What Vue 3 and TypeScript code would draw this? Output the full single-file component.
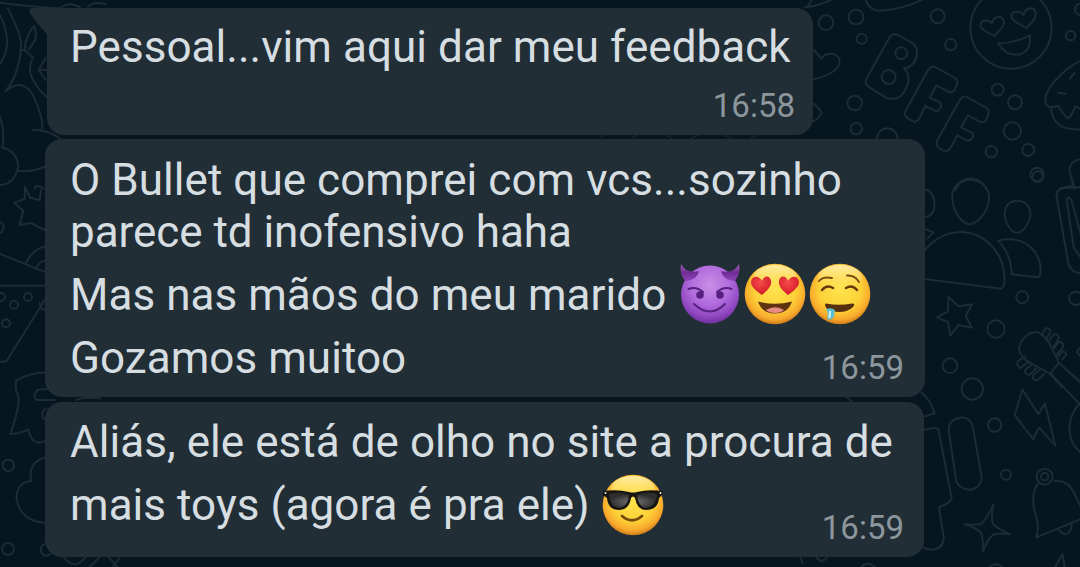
<script setup lang="ts">
type Emoji = 'devil' | 'love' | 'drool' | 'cool'
interface Line { text: string; size: string; emojis?: Emoji[] }
interface Message { id: string; time: string; lines: Line[] }

const messages: Message[] = [
  { id: 'first', time: '16:58', lines: [{ text: 'Pessoal...vim aqui dar meu feedback', size: 'normal' }] },
  {
    id: 'second',
    time: '16:59',
    lines: [
      { text: 'O Bullet que comprei com vcs...sozinho', size: 'normal' },
      { text: 'parece td inofensivo haha', size: 'tight' },
      { text: 'Mas nas mãos do meu marido', size: 'spaced', emojis: ['devil', 'love', 'drool'] },
      { text: 'Gozamos muitoo', size: 'spaced' },
    ],
  },
  {
    id: 'third',
    time: '16:59',
    lines: [
      { text: 'Aliás, ele está de olho no site a procura de', size: 'normal' },
      { text: 'mais toys (agora é pra ele)', size: 'spaced', emojis: ['cool'] },
    ],
  },
]
</script>

<template>
  <main class="screen">
    <svg class="wallpaper" viewBox="0 0 1080 567" aria-hidden="true">
      <defs>
        <radialGradient id="yellow" cx=".5" cy=".42" r=".58">
          <stop offset="0" stop-color="#ffe34e" /><stop offset=".6" stop-color="#fdd138" />
          <stop offset=".86" stop-color="#f8a92c" /><stop offset="1" stop-color="#cf7a1b" />
        </radialGradient>
        <linearGradient id="shine" x2="0" y2="1">
          <stop offset="0" stop-color="#fff3bd" stop-opacity=".85" /><stop offset="1" stop-color="#ffe45c" stop-opacity="0" />
        </linearGradient>
        <radialGradient id="purple" cx=".5" cy=".34" r=".68">
          <stop offset="0" stop-color="#c98fe6" /><stop offset=".5" stop-color="#b06bdc" /><stop offset=".8" stop-color="#9147c0" /><stop offset="1" stop-color="#692d98" />
        </radialGradient>
        <linearGradient id="horn" x2="0" y2="1"><stop offset="0" stop-color="#a568bf" /><stop offset=".5" stop-color="#702b94" /><stop offset="1" stop-color="#8f45b8" /></linearGradient>
        <radialGradient id="red" cx=".45" cy=".35" r=".7"><stop offset="0" stop-color="#f54b49" /><stop offset="1" stop-color="#cf1626" /></radialGradient>
        <radialGradient id="lens" cx=".5" cy=".6" r=".5"><stop offset="0" stop-color="#777" /><stop offset="1" stop-color="#2d2d2d" /></radialGradient>
      </defs>
      <!-- top right: smiley, balloon letters, cupcake -->
      <g transform="translate(800 0) scale(.33333)">
        <circle cx="78" cy="68" r="22" /><circle cx="168" cy="51" r="22" /><circle cx="185" cy="116" r="15" />
        <circle cx="413" cy="49" r="21" /><circle cx="452" cy="134" r="17" /><circle cx="164" cy="309" r="22" />
        <circle cx="169" cy="386" r="17" /><circle cx="593" cy="269" r="18" /><circle cx="645" cy="307" r="21" />
        <circle cx="637" cy="393" r="26" /><circle cx="574" cy="455" r="17" /><circle cx="685" cy="450" r="18" />
        <circle cx="711" cy="523" r="20" /><circle cx="812" cy="107" r="14" /><circle cx="262" cy="416" r="31" />
        <circle cx="842" cy="28" r="17" />
        <path d="M195 -5Q204 29 237 32Q306 30 375 -5M15 22Q65 17 100 -5M22 22L38 -5" />
        <circle cx="633" cy="84" r="122" />
        <path d="M583 108C560 96 536 84 542 71C548 56 568 61 576 69C581 47 607 45 612 63C615 80 594 96 583 108ZM680 84C657 72 630 60 635 44C641 30 663 35 671 45C674 22 702 18 707 38C710 57 691 72 680 84Z" />
        <path d="M594 130Q645 130 689 106Q695 148 665 161Q620 173 594 130Z" />
        <path d="M42 150L64 176C74 159 106 153 118 177C125 202 91 228 40 238M42 311Q56 322 65 338Q55 358 38 365" />
        <path d="M271 108Q280 99 294 105L335 128Q352 139 351 160C350 181 337 202 312 205C328 222 331 243 316 269C302 298 282 302 257 292L209 263Q192 251 200 235Z" />
        <circle cx="304" cy="160" r="18" /><circle cx="266" cy="231" r="21" />
        <path d="M316 333L384 210Q395 195 408 202L465 234Q475 242 471 252L463 271Q455 282 441 273L409 256L389 293L418 306Q428 314 419 327Q411 337 402 331L376 318L359 353Q348 372 334 361Q307 350 316 333Z" />
        <path d="M412 421L479 301Q490 284 503 292L560 324Q569 333 565 344L558 361Q549 371 537 364L504 346L483 382L514 397Q524 404 516 415Q508 425 497 420L472 406L453 442Q443 457 428 451Q403 438 412 421Z" />
        <path d="M845 180C791 207 730 267 736 309Q746 326 760 320L775 318Q784 333 797 350Q807 363 820 333L826 318L845 330M754 322C754 372 789 391 845 388M775 278L798 281M809 236L823 219" />
        <path d="M845 477Q806 482 809 515L819 557L780 565M467 570Q481 535 514 535Q547 540 561 570" />
      </g>
      <!-- middle right: people, star, brush -->
      <g transform="translate(800 180) scale(.33333)">
        <path d="M510 -1C551 -1 575 34 565 70C556 105 530 133 506 133C478 126 459 88 457 56C454 23 477 0 510 -1ZM651 62C684 62 698 91 688 119Q672 160 648 158C628 154 612 118 614 96C617 74 632 63 651 62Z" />
        <path d="M350 242C390 180 437 154 489 156C552 160 600 211 610 265C615 300 617 321 602 326L350 294M594 182C637 171 676 180 705 216C722 239 725 273 719 289Q713 292 704 291L635 283Q634 223 594 182Z" />
        <path d="M376 28C401 34 405 66 403 84Q399 106 378 111M376 147L400 157L382 176" />
        <path d="M445 351L476 379L516 373L497 407L515 443L476 435L451 466L444 426L410 412L444 394Z" />
        <circle cx="667" cy="352" r="18" /><circle cx="588" cy="447" r="26" /><circle cx="450" cy="557" r="22" />
        <circle cx="827" cy="355" r="20" /><circle cx="713" cy="-10" r="16" />
        <path d="M845 22L799 23Q765 27 770 51L805 250Q815 280 842 279M845 237L821 202L800 59Q804 48 814 59L845 173M814 -10L824 28" />
        <path d="M711 456C682 456 661 480 657 507Q661 529 680 543L750 582L777 548L749 491Q728 461 711 456ZM777 548L840 607M750 582L785 620" />
        <path d="M725 465L737 445Q752 444 751 456L739 478M745 485L762 463Q779 461 775 477L760 501M762 505L777 485Q793 487 788 503L771 523M775 530L787 514Q801 516 797 527L787 538M677 530L656 541Q645 556 662 564L687 544M696 553L676 569Q672 584 689 584L711 563M719 570L699 586Q697 602 712 601L733 581M838 504L831 516L842 530" />
      </g>
      <!-- bottom right: crayon, bolt, bell, sparkle -->
      <g transform="translate(800 370) scale(.33333)">
        <circle cx="517" cy="57" r="32" /><circle cx="584" cy="165" r="20" /><circle cx="618" cy="314" r="15" />
        <path d="M667 59L715 132L735 101L766 227L717 173L699 207L644 135ZM365 68Q392 90 404 130L374 139" />
        <path d="M446 180Q444 150 480 143Q509 141 518 168L545 323Q544 352 512 359Q481 359 469 335Z" />
        <path d="M374 179Q405 170 415 177L455 385Q450 400 417 411L431 501Q432 533 399 539Q370 539 366 527" />
        <path d="M580 403Q572 445 579 462Q598 480 631 493Q600 488 579 494Q560 510 549 545Q550 500 542 487Q525 472 495 463Q530 467 544 461Q560 448 580 403Z" />
        <circle cx="734" cy="320" r="24" /><circle cx="734" cy="320" r="11" />
        <path d="M713 341C694 370 697 405 709 441Q718 469 709 502L845 446M764 332C808 330 818 356 845 417M776 476Q786 497 804 490Q819 476 814 459M845 95C802 133 791 209 845 250M760 600L788 552L795 600" />
        <path d="M140 80Q146 88 158 96M565 595Q587 570 610 595M180 595Q202 568 228 595M50 563Q65 583 80 563M0 560L8 580" />
        <path d="M799 0L845 37M752 10L843 107" />
      </g>
      <!-- left edge: mascot, party hat, cloud -->
      <g transform="scale(.33333)">
        <path d="M0 8Q100 21 175 25M0 45Q42 130 0 192M24 25C48 79 74 114 59 175Q47 239 17 273M60 150L75 151C72 124 88 92 103 79Q111 98 105 121L87 148M75 151L99 173Q80 210 99 239Q113 268 140 291M137 173L116 210L137 240M116 210L140 210" />
        <path d="M18 273C60 236 94 262 107 305Q128 351 127 385M100 390Q145 389 180 416M0 350Q16 397 7 443Q51 452 55 500Q44 552 0 556M55 512Q96 518 140 498M105 566Q105 551 130 565M180 25Q205 3 240 21M265 20Q280 3 317 12" />
      </g>
      <g transform="translate(0 190) scale(.33333)">
        <path d="M123 0L119 30L91 23L75 -9L74 27L43 38L70 62L59 105L92 99L140 123M0 95Q18 103 6 126L-3 130M0 192L140 248M77 222Q96 176 140 168M107 237Q115 215 140 210M0 287H140M140 320L24 506Q20 518 0 515M51 570Q86 550 140 547M119 340Q120 359 140 361" />
        <circle cx="3" cy="321" r="12" /><circle cx="42" cy="344" r="12" /><circle cx="84" cy="321" r="12" /><circle cx="18" cy="400" r="12" />
      </g>
      <g transform="translate(0 380) scale(.33333)">
        <path d="M49 0Q43 30 55 49Q61 76 31 162Q51 163 85 149Q92 185 115 188Q127 188 140 181M140 27L114 29Q96 44 109 60L165 60M140 85Q122 91 128 114L140 119M140 231C104 240 83 265 95 303C60 303 42 337 53 370Q69 425 140 429" />
        <circle cx="25" cy="256" r="17" /><circle cx="24" cy="507" r="18" /><circle cx="140" cy="509" r="18" />
        <path d="M190 530Q225 575 258 530M270 560L300 530M327 532L352 560M340 558L358 535M230 60Q250 50 300 55" />
      </g>
      <path d="M600 138L605 134M632 138L638 134M664 134L673 139M690 139L700 134M723 134L732 139M750 139L760 134" />
    </svg>

    <article v-for="message in messages" :key="message.id" class="bubble" :class="message.id">
      <svg v-if="message.id === 'first'" class="tail" viewBox="0 0 24 30" aria-hidden="true">
        <path d="M24 0H3Q-1 1 1 5Q8 16 19 27H24Z" fill="#222e35" />
      </svg>
      <div v-for="line in message.lines" :key="line.text" class="line" :class="line.size">
        <span class="words">{{ line.text }}</span>
        <svg v-for="emoji in line.emojis" :key="emoji" class="emoji" :class="emoji" viewBox="0 0 62 62" aria-hidden="true">
          <template v-if="emoji === 'devil'">
            <circle cx="31" cy="31.5" r="29" fill="url(#purple)" />
            <path d="M2 1Q7 11 20 8Q18 17 7 18Q0 13 2 1ZM60 1Q55 11 42 8Q44 17 55 18Q62 13 60 1Z" fill="url(#horn)" />
            <g fill="none" stroke="#572080" stroke-linecap="round" stroke-width="2"><path d="M9.500 26Q17 23 24 29M52.500 26Q45 23 38 29M15 41Q31 56 46 41" /></g>
            <circle cx="21" cy="32" r="3.800" fill="#572080" /><circle cx="41" cy="32" r="3.800" fill="#572080" />
          </template>
          <template v-else>
            <circle cx="31" cy="31" r="30.3" fill="url(#yellow)" /><ellipse cx="31" cy="15" rx="22" ry="13" fill="url(#shine)" />
          </template>
          <template v-if="emoji === 'love'">
            <path d="M18 32C9 26 5 21 8 16C11 12 16 14 18 18C20 12 26 12 27 18C28 23 23 28 18 32Z" fill="url(#red)" />
            <path d="M44 32C39 28 34 23 35 18C36 12 42 12 44 18C46 14 51 12 54 16C57 21 53 26 44 32Z" fill="url(#red)" />
            <path d="M14 38.500Q31 43 48 38.500Q44 50.500 31 50.500Q18 50.500 14 38.500Z" fill="#5f3210" />
            <path d="M22 47Q31 41.500 40 47Q37 50 31 50Q25 50 22 47Z" fill="#e58c84" />
          </template>
          <template v-if="emoji === 'drool'">
            <path d="M10 18Q14 13 23 15M38 12.500Q46 12 50 19" fill="none" stroke="#7d4c10" stroke-width="1.9" stroke-linecap="round" />
            <path d="M13 27Q18 21 24 25M37 25Q43 21 48 27" fill="none" stroke="#66370a" stroke-width="2.4" stroke-linecap="round" />
            <path d="M17 40.500Q30 43 43 40.500Q47 40.500 44 44Q39 49 30 49Q17 49 16 42Q16 40 17 40.500Z" fill="#56300c" />
            <path d="M17 46Q22 44 26 47Q25 51 25 54Q20 59 18 55Q20 50 17 46Z" fill="#57bfd0" /><path d="M21 48L20.500 55" stroke="#d7f6ef" stroke-width="2" />
          </template>
          <template v-if="emoji === 'cool'">
            <path d="M1 17Q16 15 27 18Q31 19 35 18Q46 15 61 17L60 21L57 24Q56 36 44 36Q35 36 33 24Q31 21 29 24Q27 36 17 36Q6 36 5 24L1 21Z" fill="#171512" />
            <path d="M7 20Q17 17 27 21Q26 33 17 34Q8 33 7 20ZM35 21Q45 17 55 20Q54 33 44 34Q36 33 35 21Z" fill="url(#lens)" />
            <circle cx="3.5" cy="19" r="1" fill="#eee" /><circle cx="58.5" cy="19" r="1" fill="#eee" />
            <path d="M20 42Q30 50.500 40 42" fill="none" stroke="#73480c" stroke-width="2.800" stroke-linecap="round" />
          </template>
        </svg>
      </div>
      <time class="time">{{ message.time }}</time>
    </article>
  </main>
</template>

<style>
body { margin: 0; background: #06161e; }
</style>

<style scoped>
.screen {
  position: relative;
  box-sizing: border-box;
  width: 1080px;
  height: 567px;
  padding: 8px 0 0 45px;
  overflow: hidden;
  background: #06161e;
  font-family: Roboto, sans-serif;
}
.wallpaper {
  position: absolute;
  inset: 0;
  width: 1080px;
  height: 567px;
  fill: none;
  stroke: #1d2c34;
}
.wallpaper g { stroke-width: 6px; stroke-linejoin: round; stroke-linecap: round; }
.bubble {
  position: relative;
  box-sizing: border-box;
  width: 880px;
  margin-bottom: 4px;
  padding: 15px 0 0 25px;
  border-radius: 17px;
  background: #222e35;
}
.first { width: 766px; height: 127px; margin-left: 2px; padding: 13px 0 0 23px; border-top-left-radius: 4px; }
.second { height: 258px; }
.third { height: 155px; width: 879px; margin-top: 5px; }
.third { padding-top: 14px; }
.tail { position: absolute; left: -18px; top: 0; width: 24px; height: 30px; }
.line {
  display: flex;
  align-items: center;
  height: 52px;
  color: #d6dee2;
  font-size: 44px;
  line-height: 52px;
  letter-spacing: .05px;
  white-space: nowrap;
}
.tight { letter-spacing: -.05px; }
.spaced { margin-top: 11px; }
.emoji { flex: none; width: 62px; height: 62px; margin: -6px 3px -4px 0; }
.cool { margin-top: -4px; }
.words + .emoji { margin-left: 12.5px; }
.time {
  position: absolute;
  right: 21px;
  bottom: 10px;
  color: #8c979d;
  font-size: 33px;
  line-height: 39px;
}
.first .time { right: 18px; }
.third .time { right: 20px; }
</style>
